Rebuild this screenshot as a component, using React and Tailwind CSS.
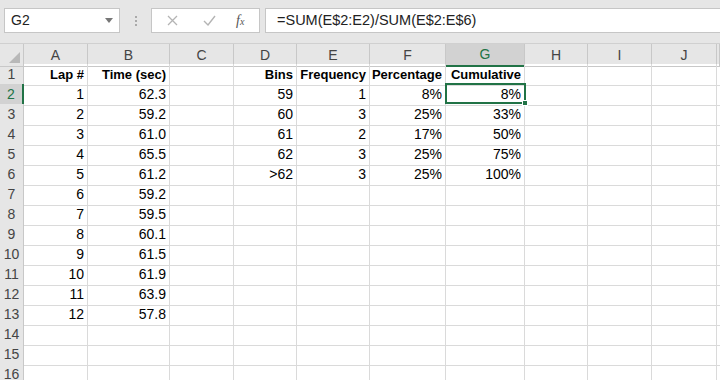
import React from 'react';

const cols = ['A', 'B', 'C', 'D', 'E', 'F', 'G', 'H', 'I', 'J', ''];

const data = {
    1: ['Lap #', 'Time (sec)', '', 'Bins', 'Frequency', 'Percentage', 'Cumulative'],
    2: ['1', '62.3', '', '59', '1', '8%', '8%'],
    3: ['2', '59.2', '', '60', '3', '25%', '33%'],
    4: ['3', '61.0', '', '61', '2', '17%', '50%'],
    5: ['4', '65.5', '', '62', '3', '25%', '75%'],
    6: ['5', '61.2', '', '>62', '3', '25%', '100%'],
    7: ['6', '59.2'],
    8: ['7', '59.5'],
    9: ['8', '60.1'],
    10: ['9', '61.5'],
    11: ['10', '61.9'],
    12: ['11', '63.9'],
    13: ['12', '57.8'],
};

const rows = Array.from({ length: 16 }, (_, i) => i + 1);

const gridCols = 'grid grid-cols-[24px_64px_82px_64px_63px_73px_76px_79px_63px_64px_65px_1fr]';

const Toolbar = () => (
    <div className="h-[44px] bg-[#e6e6e6] border-b border-[#d0d0d0] flex items-start pt-[8px] pl-[4px]">
        <div className="w-[116px] h-[25px] bg-white border border-[#c6c6c6] flex items-center justify-between pl-[6px] pr-[6px] text-[14px] text-[#222]">
            <span>G2</span>
            <svg width="8" height="5" viewBox="0 0 8 5"><path d="M0 0h8L4 5z" fill="#777" /></svg>
        </div>
        <div className="w-[31px] h-[25px] flex flex-col items-center justify-center gap-[2px]">
            <span className="w-[2px] h-[2px] bg-[#aaa]" />
            <span className="w-[2px] h-[2px] bg-[#aaa]" />
            <span className="w-[2px] h-[2px] bg-[#aaa]" />
        </div>
        <div className="w-[109px] h-[25px] bg-white border border-[#c6c6c6] flex items-center">
            <svg className="ml-[15px]" width="11" height="11" viewBox="0 0 11 11"><path d="M1 1l9 9M10 1l-9 9" stroke="#b4b4b4" strokeWidth="1.3" fill="none" /></svg>
            <svg className="ml-[25px]" width="13" height="11" viewBox="0 0 13 11"><path d="M1 6l4 4 7-9" stroke="#b4b4b4" strokeWidth="1.4" fill="none" /></svg>
            <span className="ml-[20px] text-[14px] italic text-[#555] font-['Liberation_Serif',serif]">f<span className="text-[10px]">x</span></span>
        </div>
        <div className="ml-[5px] flex-1 h-[25px] bg-white border border-[#c6c6c6] border-r-0 flex items-center pl-[11px] text-[14.5px] text-[#222]">
            =SUM(E$2:E2)/SUM(E$2:E$6)
        </div>
    </div>
);

const App = () => (
    <div className="w-[720px] h-[380px] overflow-hidden bg-white font-['Liberation_Sans',Arial,sans-serif] relative">
        <Toolbar />
        <div className={`${gridCols} h-[20px] bg-[#e6e6e6]`}>
            <div className="border-r border-b border-[#c8c8c8] relative">
                <svg className="absolute right-[3px] bottom-[3px]" width="11" height="11" viewBox="0 0 11 11"><path d="M11 0v11H0z" fill="#b8b8b8" /></svg>
            </div>
            {cols.map((c, i) => (
                <div
                    key={i}
                    className={
                        c === 'G'
                            ? 'bg-[#d2d2d2] border-r border-[#c8c8c8] border-b-2 border-b-[#217346] text-[#217346] text-[14px] flex items-center justify-center'
                            : 'border-r border-b border-[#c8c8c8] text-[#444] text-[14px] flex items-center justify-center'
                    }
                >
                    {c}
                </div>
            ))}
        </div>
        {rows.map((r) => (
            <div key={r} className={`${gridCols} h-[20px]`}>
                <div
                    className={
                        r === 2
                            ? 'bg-[#d2d2d2] border-b border-[#c8c8c8] border-r-2 border-r-[#217346] text-[#217346] text-[14px] flex items-center justify-center'
                            : 'bg-[#e6e6e6] border-r border-b border-[#c8c8c8] text-[#444] text-[14px] flex items-center justify-center'
                    }
                >
                    {r}
                </div>
                {cols.map((c, i) => {
                    const v = (data[r] || [])[i] || '';
                    return (
                        <div
                            key={i}
                            className={`border-r border-b border-[#dadada] flex items-center justify-end pr-[3px] text-black whitespace-nowrap ${r === 1 ? 'font-bold text-[13px]' : 'text-[14px]'}`}
                        >
                            {v}
                        </div>
                    );
                })}
            </div>
        ))}
        <div className="absolute left-[445px] top-[83px] w-[81px] h-[21px] border-2 border-[#217346]" />
        <div className="absolute left-[522px] top-[100px] w-[6px] h-[6px] bg-[#217346] border border-white" />
    </div>
);

export default App;
